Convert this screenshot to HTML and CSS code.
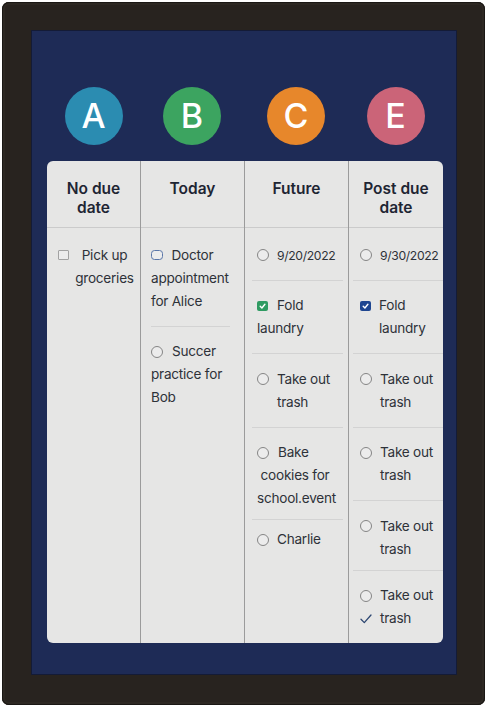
FILE: index.html
```html
<!DOCTYPE html>
<html lang="en">
<head>
<meta charset="utf-8">
<title>Chore board</title>
<link rel="stylesheet" href="styles.css">
</head>
<body>
<div class="frame">
  <div class="board">
    <div class="avatars">
      <div class="avatar a">A</div>
      <div class="avatar b">B</div>
      <div class="avatar c">C</div>
      <div class="avatar e">E</div>
    </div>
    <div class="card">
      <section class="col col1">
        <h2 class="head">No due<br>date</h2>
        <div class="list">
          <div class="item center">
            <span class="ico"><span class="sq"></span></span>
            <span class="txt">Pick up<br>groceries</span>
          </div>
        </div>
      </section>
      <section class="col col2">
        <h2 class="head">Today</h2>
        <div class="list">
          <div class="item wrap sep">
            <span class="ico"><span class="rsq"></span></span>Doctor<br>appointment<br>for Alice
          </div>
          <div class="item wrap">
            <span class="ico"><span class="rad"></span></span>Succer<br>practice for<br>Bob
          </div>
        </div>
      </section>
      <section class="col col3">
        <h2 class="head">Future</h2>
        <div class="list">
          <div class="item hang sep">
            <span class="ico"><span class="rad"></span></span>
            <span class="txt date">9/20/2022</span>
          </div>
          <div class="item wrap sep">
            <span class="ico"><svg width="11" height="10" viewBox="0 0 11 10"><rect width="11" height="10" rx="2" fill="#2f9b62"/><polyline points="3.2,5.2 4.9,7 7.9,3.3" fill="none" stroke="#fff" stroke-width="1.4" stroke-linecap="round" stroke-linejoin="round"/></svg></span>Fold<br>laundry
          </div>
          <div class="item hang sep">
            <span class="ico"><span class="rad"></span></span>
            <span class="txt">Take out<br>trash</span>
          </div>
          <div class="item wrap sep tight">
            <span class="ico"><span class="rad"></span></span>Bake<br>&nbsp;cookies for<br>school.event
          </div>
          <div class="item hang after-tight">
            <span class="ico"><span class="rad"></span></span>
            <span class="txt">Charlie</span>
          </div>
        </div>
      </section>
      <section class="col col4">
        <h2 class="head">Post due<br>date</h2>
        <div class="list">
          <div class="item hang sep">
            <span class="ico"><span class="rad"></span></span>
            <span class="txt date">9/30/2022</span>
          </div>
          <div class="item hang sep">
            <span class="ico"><svg width="11" height="10" viewBox="0 0 11 10"><rect width="11" height="10" rx="2" fill="#1f4690"/><polyline points="3.2,5.2 4.9,7 7.9,3.3" fill="none" stroke="#fff" stroke-width="1.4" stroke-linecap="round" stroke-linejoin="round"/></svg></span>
            <span class="txt">Fold<br>laundry</span>
          </div>
          <div class="item hang sep">
            <span class="ico"><span class="rad"></span></span>
            <span class="txt">Take out<br>trash</span>
          </div>
          <div class="item hang sep">
            <span class="ico"><span class="rad"></span></span>
            <span class="txt">Take out<br>trash</span>
          </div>
          <div class="item hang sep short">
            <span class="ico"><span class="rad"></span></span>
            <span class="txt">Take out<br>trash</span>
          </div>
          <div class="item rows">
            <div class="row">
              <span class="ico"><span class="rad"></span></span>
              <span class="txt">Take out</span>
            </div>
            <div class="row">
              <span class="ico"><svg width="12" height="10" viewBox="0 0 12 10"><polyline points="1,5.2 4.3,8.6 11,1" fill="none" stroke="#2f4872" stroke-width="1.3" stroke-linecap="round" stroke-linejoin="round"/></svg></span>
              <span class="txt">trash</span>
            </div>
          </div>
        </div>
      </section>
    </div>
  </div>
</div>
</body>
</html>
```
FILE: styles.css
```css
* { box-sizing: border-box; }
html, body {
  margin: 0;
  padding: 0;
  background: #ffffff;
}
body {
  width: 487px;
  height: 709px;
  overflow: hidden;
  font-family: Inter, "Noto Sans", "Liberation Sans", sans-serif;
  color: #2e3239;
}
.frame {
  margin: 2px 0 0 2px;
  width: 483px;
  height: 703px;
  padding: 29px 29px 31px 30px;
  background: #28231f;
  border-radius: 7px;
  box-shadow: inset 0 0 0 1px #1a1714, inset 0 0 0 3px #2d2823;
}
.board {
  height: 100%;
  background: #1e2b56;
  box-shadow: 0 0 0 1px #141b36;
  padding: 56px 13px 31px 15px;
  display: flex;
  flex-direction: column;
  gap: 16px;
}
.avatars {
  display: grid;
  grid-template-columns: 93px 104px 104px 95px;
  justify-items: center;
}
.avatar {
  width: 58px;
  height: 58px;
  border-radius: 50%;
  display: flex;
  align-items: center;
  justify-content: center;
  color: #ffffff;
  font-size: 34px;
  font-weight: 500;
  line-height: 1;
}
.avatar.a { background: #2b8cb1; }
.avatar.b { background: #3ca460; }
.avatar.c { background: #e7872b; }
.avatar.e { background: #cb6478; }

.card {
  flex: 1;
  display: grid;
  grid-template-columns: 93px 104px 104px 95px;
  background: #e6e6e5;
  border-radius: 6px;
  overflow: hidden;
}
.col {
  display: flex;
  flex-direction: column;
  min-width: 0;
}
.col + .col { border-left: 1px solid #9b9b9b; }
.head {
  margin: 0;
  height: 67px;
  padding-top: 18px;
  border-bottom: 1px solid #cbcbcb;
  text-align: center;
  font-size: 15.5px;
  line-height: 19px;
  font-weight: 600;
  color: #1e2533;
}
.list { padding-top: 2px; }
.item {
  font-size: 13.6px;
  letter-spacing: -0.25px;
  line-height: 23px;
  padding: 13.5px 0 13px;
  white-space: nowrap;
}
.item.sep { border-bottom: 1px solid #d3d3d3; }
.item.tight { padding-bottom: 9px; }
.item.after-tight { padding-top: 8px; }
.item.short { padding-bottom: 9px; }

.ico {
  display: inline-flex;
  align-items: center;
  height: 23px;
  vertical-align: top;
}
.item.wrap .ico { margin-right: 9px; }
.item.hang, .row {
  display: flex;
  align-items: flex-start;
}
.item.hang .ico, .row .ico { margin-right: 8px; }
.item.center { display: flex; }
.item.center .txt { flex: 1; text-align: center; }
.date { font-size: 12.2px; letter-spacing: -0.35px; }
.rows .row .ico { width: 12px; }

.sq {
  width: 11px;
  height: 10px;
  border: 1px solid #a2a2a2;
  border-radius: 1px;
  background: #ececec;
}
.rsq {
  width: 11.5px;
  height: 10px;
  border: 1.2px solid #5a76a8;
  border-radius: 3.5px;
  background: #ececec;
}
.rad {
  width: 12px;
  height: 12px;
  border: 1px solid #858585;
  border-radius: 50%;
  background: #ececec;
}

.col1 .list { padding-left: 11px; }
.col2 .item { margin: 0 14px 0 10px; }
.col3 .item { margin: 0 5px 0 7px; padding-left: 5px; }
.col4 .item { margin: 0 0 0 4px; padding-left: 7px; }
```
